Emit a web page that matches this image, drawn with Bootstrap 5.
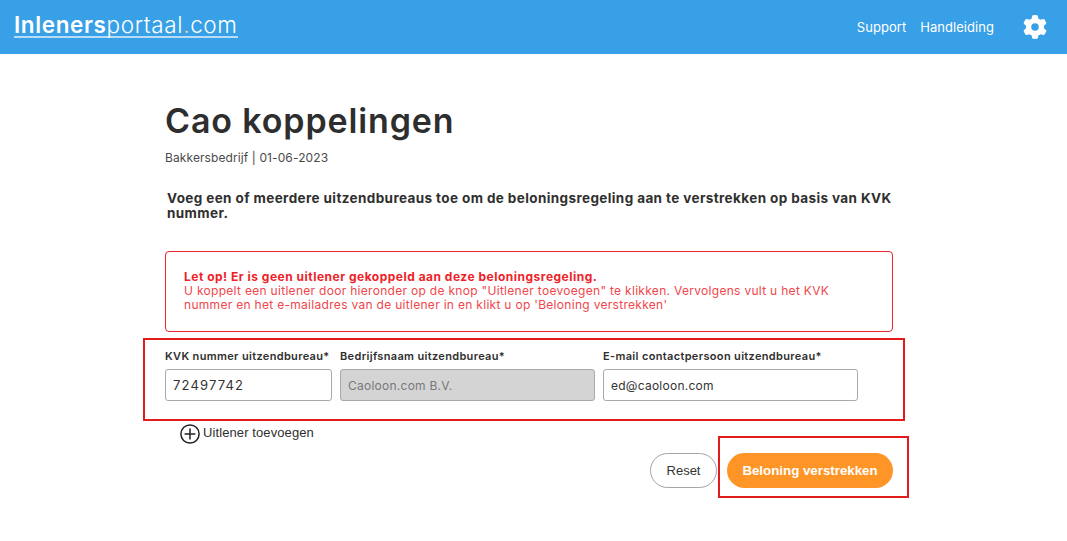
<!DOCTYPE html>
<html lang="nl"><head><meta charset="utf-8"><title>Cao koppelingen</title>
<link href="https://cdn.jsdelivr.net/npm/bootstrap@5.3.0/dist/css/bootstrap.min.css" rel="stylesheet">
<style>
html,body{height:541px;overflow:hidden}
body{font-family:Inter,"Liberation Sans",sans-serif;color:#2f2f2f;background:#fff}
.topbar{height:54px;background:#38a0e6;padding:0 20px 0 14px}
.logo-word{font-family:Inter,sans-serif;font-size:22.5px;line-height:22px;color:#fff;border-bottom:2px solid #b9dcf6;text-decoration:none;font-weight:300;letter-spacing:.63px;margin-top:-3px;display:block;height:24px;white-space:nowrap}
.logo-word b{font-weight:600}
.logo-dot{color:#fbd0a0}
.top-nav{gap:14px;margin-top:1px}
.toplink{color:#fff;font-size:13px;text-decoration:none;letter-spacing:.05px}
.gear{margin-left:15px;margin-top:-1px}
.sheet{width:728px;margin-left:165px}
.page-title{font-size:34px;font-weight:600;line-height:39px;margin:47px 0 0;letter-spacing:.87px;color:#2e2e2e}
.crumb{font-size:12px;line-height:15px;margin:10px 0 0;letter-spacing:.1px;color:#4a4a4a}
.intro{font-size:13.5px;font-weight:700;line-height:15px;margin:26px 0 0 2px;letter-spacing:.39px;width:726px}
.warn{border:1px solid #e8262b;border-radius:4px;height:81px;margin-top:30px;padding:18px 20px 18px 18px;color:#f0464b;font-size:12px;line-height:14px;letter-spacing:.3px}
.warn strong{color:#ee2228;font-weight:700;font-size:12px;display:block;letter-spacing:.5px}
.mark-box{border:2px solid #e21b1b}
.fields{margin:6px -12px 0 -22px;padding:2px 0 0 20px;height:83px;gap:8px}
.field-a{width:167px}.field-b{width:255px}.field-c{width:255px}
.field-label{font-size:11px;font-weight:600;line-height:14px;margin:0 0 6px;white-space:nowrap;letter-spacing:.34px}
.fld{height:32px;border:1px solid #a9a9ae;border-radius:3px;font-size:12px;padding:0 7px;color:#333;letter-spacing:.25px}
.fld-num{font-size:13px;letter-spacing:1.15px}
.fld:disabled{background:#d4d4d4;color:#77787a}
.add-row{font-family:"Liberation Sans",sans-serif;font-size:13px;margin:1px 0 0 15px;height:24px;letter-spacing:.1px;gap:3px}
.add-text{margin-bottom:3px}
.actions{margin:-10px -16px 0 0}
.reset-pill{font-family:"Liberation Sans",sans-serif;font-size:13px;width:67px;height:35px;border-radius:18px;border:1px solid #a5a5a5;background:#fff;color:#333;padding:0;margin-top:17px}
.go-wrap{margin-left:1px;padding:15px 14px 8px 7px;height:62px;width:191px}
.go-pill{font-family:"Liberation Sans",sans-serif;font-size:13.3px;font-weight:700;width:166px;height:35px;border-radius:18px;border:0;background:#fe9526;color:#fff;padding:0}
</style></head>
<body>
<header class="topbar d-flex align-items-center justify-content-between">
<a class="logo-word" href="#"><b>Inleners</b>portaal<span class="logo-dot">.</span>com</a>
<nav class="top-nav d-flex align-items-center">
<a class="toplink" href="#">Support</a><a class="toplink" href="#">Handleiding</a>
<svg class="gear" width="24" height="24" viewBox="0 0 512 512" fill="#fff" aria-hidden="true"><path d="M495.9 166.6c3.2 8.7.5 18.4-6.4 24.6l-43.3 39.4c1.1 8.3 1.7 16.8 1.7 25.4s-.6 17.1-1.7 25.4l43.3 39.4c6.9 6.2 9.6 15.9 6.4 24.6-4.4 11.9-9.7 23.3-15.8 34.3l-4.7 8.1c-6.6 11-14 21.4-22.1 31.2-5.9 7.2-15.7 9.6-24.5 6.8l-55.7-17.7c-13.4 10.3-28.2 18.9-44 25.4l-12.5 57.1c-2 9.1-9 16.3-18.2 17.8-13.8 2.3-28 3.5-42.5 3.5s-28.7-1.2-42.5-3.5c-9.2-1.5-16.2-8.7-18.2-17.8l-12.5-57.1c-15.8-6.5-30.6-15.1-44-25.4l-55.6 17.8c-8.8 2.8-18.6.3-24.5-6.8-8.1-9.8-15.5-20.2-22.1-31.2l-4.7-8.1c-6.1-11-11.4-22.4-15.8-34.3-3.2-8.7-.5-18.4 6.4-24.6l43.3-39.4c-1.1-8.4-1.7-16.9-1.7-25.5s.6-17.1 1.7-25.4l-43.3-39.4c-6.9-6.2-9.6-15.9-6.4-24.6 4.4-11.9 9.7-23.3 15.8-34.3l4.7-8.1c6.6-11 14-21.4 22.1-31.2 5.9-7.2 15.7-9.6 24.5-6.8l55.7 17.7c13.4-10.3 28.2-18.9 44-25.4l12.5-57.1c2-9.1 9-16.3 18.2-17.8C227.3 1.2 241.5 0 256 0s28.7 1.2 42.5 3.5c9.2 1.5 16.2 8.7 18.2 17.8l12.5 57.1c15.8 6.5 30.6 15.1 44 25.4l55.7-17.7c8.8-2.8 18.6-.3 24.5 6.8 8.1 9.8 15.5 20.2 22.1 31.2l4.7 8.1c6.1 11 11.4 22.4 15.8 34.3zM256 336a80 80 0 1 0 0-160 80 80 0 1 0 0 160z"/></svg>
</nav>
</header>
<main class="sheet">
<h1 class="page-title">Cao koppelingen</h1>
<p class="crumb">Bakkersbedrijf | 01-06-2023</p>
<p class="intro">Voeg een of meerdere uitzendbureaus toe om de beloningsregeling aan te verstrekken op basis van KVK nummer.</p>
<div class="warn"><strong>Let op! Er is geen uitlener gekoppeld aan deze beloningsregeling.</strong>U koppelt een uitlener door hieronder op de knop "Uitlener toevoegen" te klikken. Vervolgens vult u het KVK nummer en het e-mailadres van de uitlener in en klikt u op 'Beloning verstrekken'</div>
<form>
<div class="fields mark-box d-flex">
<div class="field-a"><label class="field-label" for="f1">KVK nummer uitzendbureau*</label><input id="f1" class="form-control fld fld-num" value="72497742"></div>
<div class="field-b"><label class="field-label" for="f2">Bedrijfsnaam uitzendbureau*</label><input id="f2" class="form-control fld" value="Caoloon.com B.V." disabled></div>
<div class="field-c"><label class="field-label" for="f3">E-mail contactpersoon uitzendbureau*</label><input id="f3" class="form-control fld" value="ed@caoloon.com"></div>
</div>
<div class="add-row d-flex align-items-center">
<svg width="20" height="20" viewBox="0 0 20 20" fill="none" stroke="#222" stroke-width="1.5" aria-hidden="true"><circle cx="10" cy="10" r="9.1"/><path d="M10 4.6v10.8M4.6 10h10.8"/></svg>
<span class="add-text">Uitlener toevoegen</span>
</div>
<div class="actions d-flex justify-content-end align-items-start">
<button type="button" class="reset-pill">Reset</button>
<div class="go-wrap mark-box"><button type="button" class="go-pill">Beloning verstrekken</button></div>
</div>
</form>
</main>
<script src="https://cdn.jsdelivr.net/npm/bootstrap@5.3.0/dist/js/bootstrap.bundle.min.js"></script>
</body></html>
